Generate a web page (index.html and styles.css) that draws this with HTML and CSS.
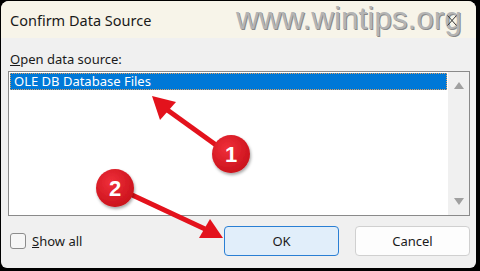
FILE: index.html
```html
<!DOCTYPE html>
<html lang="en">

<head>
    <meta charset="UTF-8">
    <meta name="viewport" content="width=device-width, initial-scale=1.0">
    <title>Confirm Data Source</title>
    <link rel="stylesheet" href="styles.css">
</head>

<body>
    <div class="dialog">
        <div class="titlebar">
            <span class="title">Confirm Data Source</span>
            <span class="watermark">www.wintips.org</span>
            <svg class="close" width="10" height="11" viewBox="0 0 10 11">
                <path d="M0.5 0.5 L9.5 10.5 M9.5 0.5 L0.5 10.5" stroke="#333" stroke-width="1" fill="none" />
            </svg>
        </div>

        <div class="content">
            <div class="label"><u>O</u>pen data source:</div>
            <div class="listbox">
                <div class="items">
                    <div class="item selected">OLE DB Database Files</div>
                </div>
                <div class="scrollbar">
                    <svg width="10" height="8" viewBox="0 0 10 8"><path d="M0 8 L5 1 L10 8 Z" fill="#a0a0a0" /></svg>
                    <svg width="10" height="8" viewBox="0 0 10 8"><path d="M0 0 L5 7 L10 0 Z" fill="#a0a0a0" /></svg>
                </div>
            </div>

            <div class="footer">
                <label class="check">
                    <span class="box"></span>
                    <span><u>S</u>how all</span>
                </label>
                <div class="buttons">
                    <button class="button primary">OK</button>
                    <button class="button">Cancel</button>
                </div>
            </div>
        </div>

        <!-- red callouts drawn over the dialog -->
        <svg class="callouts" width="480" height="271" viewBox="0 0 480 271">
            <defs>
                <radialGradient id="badge" cx="40%" cy="35%" r="70%">
                    <stop offset="0" stop-color="#f0303a" />
                    <stop offset="1" stop-color="#c8101a" />
                </radialGradient>
                <filter id="shadow" x="-30%" y="-30%" width="160%" height="160%">
                    <feDropShadow dx="1" dy="2" stdDeviation="1.5" flood-color="#000" flood-opacity="0.35" />
                </filter>
            </defs>
            <g fill="#e3121c" stroke="#e3121c">
                <line x1="216" y1="145" x2="166" y2="109" stroke-width="5" />
                <path d="M152 96 L176 102 L160 120 Z" stroke="none" />
                <line x1="130" y1="194" x2="205" y2="229" stroke-width="5" />
                <path d="M223 238 L199 238 L210 219 Z" stroke="none" />
            </g>
            <g filter="url(#shadow)">
                <circle cx="231" cy="154" r="19" fill="url(#badge)" />
                <circle cx="115" cy="188" r="19" fill="url(#badge)" />
            </g>
            <text x="231" y="162" class="badge-num">1</text>
            <text x="115" y="196" class="badge-num">2</text>
        </svg>
    </div>
</body>

</html>
```

FILE: styles.css
```css
body {
    margin: 0;
    background: #000;
    font-family: "Noto Sans", "Open Sans", sans-serif;
    color: #1a1a1a;
}

.dialog {
    position: relative;
    width: 475px;
    height: 267px;
    margin: 1px 0 0 1px;
    background-color: #f0f0f0;
    border-radius: 8px 8px 6px 6px;
    overflow: hidden;
    display: flex;
    flex-direction: column;
}

.titlebar {
    height: 37px;
    background-color: #f7f4e9;
    display: flex;
    align-items: center;
    padding-left: 9px;
}

.title {
    font-size: 14.5px;
    width: 226px;
}

.watermark {
    font-family: "Liberation Sans", Arial, sans-serif;
    font-size: 31.5px;
    color: #b4b4b4;
    text-shadow: 1px 1px 0 #8a8a8a;
    margin-top: -2px;
}

.close {
    position: absolute;
    left: 446px;
    top: 14px;
}

.content {
    flex: 1;
    padding: 0 6px 0 7px;
    display: flex;
    flex-direction: column;
}

.label {
    font-size: 13px;
    margin: 12px 0 0 2px;
    height: 21px;
}

.listbox {
    height: 143px;
    border: 1px solid #8a8a8a;
    background-color: #fff;
    display: flex;
}

.items {
    flex: 1;
    padding: 1px 1px 0 1px;
}

.item {
    font-size: 13px;
    height: 17px;
    line-height: 16px;
    padding-left: 4px;
}

.item.selected {
    background-color: #0078d7;
    color: #fff;
    outline: 1px dotted #e0a060;
    outline-offset: -1px;
}

.scrollbar {
    width: 21px;
    background-color: #f0f0f0;
    display: flex;
    flex-direction: column;
    justify-content: space-between;
    align-items: center;
    padding: 9px 0 9px 0;
}

.footer {
    flex: 1;
    display: flex;
    align-items: center;
    justify-content: space-between;
    padding-bottom: 2px;
}

.check {
    display: flex;
    align-items: center;
    gap: 6px;
    font-size: 13px;
    margin-left: 2px;
}

.box {
    width: 14px;
    height: 14px;
    border: 1px solid #8c8c8c;
    border-radius: 3px;
    background-color: #f6f6f6;
}

.buttons {
    display: flex;
    gap: 16px;
}

.button {
    width: 115px;
    height: 30px;
    font-family: "Noto Sans", "Open Sans", sans-serif;
    font-size: 13px;
    color: #1a1a1a;
    background-color: #fdfdfd;
    border: 1px solid #d0d0d0;
    border-radius: 4px;
    padding: 0;
}

.button.primary {
    background-color: #e1eefa;
    border-color: #2a7fd4;
}

.callouts {
    position: absolute;
    left: -1px;
    top: -1px;
}

.badge-num {
    font-family: "Liberation Sans", Arial, sans-serif;
    font-weight: bold;
    font-size: 22px;
    fill: #fff;
    text-anchor: middle;
}
```
